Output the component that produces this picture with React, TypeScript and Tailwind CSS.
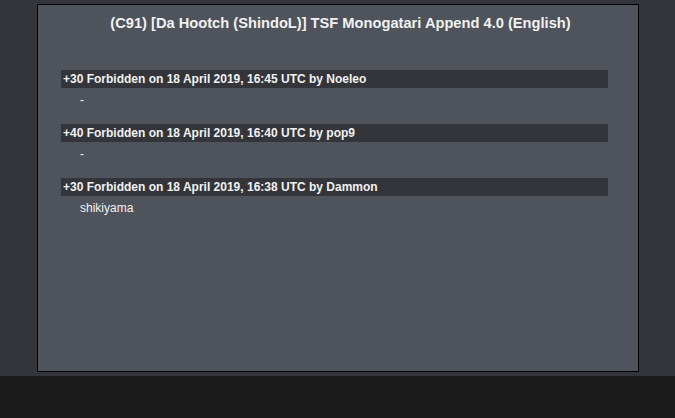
import React from 'react';

const comments = [
  { score: '+30', who: 'Noeleo', time: '16:45', body: '-' },
  { score: '+40', who: 'pop9', time: '16:40', body: '-' },
  { score: '+30', who: 'Dammon', time: '16:38', body: 'shikiyama' },
];

export default function App() {
  return (
    <div className="w-[675px] h-[418px] flex flex-col bg-[#1a1a1a] font-['Liberation_Sans',Arial,sans-serif]">
      <div className="h-[376px] bg-[#34353b] pt-[4px] pl-[37px]">
        <div className="w-[602px] h-[368px] border border-black bg-[#4f535b] text-[#f1f1f1]">
          <h1 className="text-center font-bold text-[14.67px] leading-[18px] pt-[9px] pl-[5px]">
            (C91) [Da Hootch (ShindoL)] TSF Monogatari Append 4.0 (English)
          </h1>
          <div className="mt-[38px] ml-[23px] w-[547px]">
            {comments.map((c, i) => (
              <div key={i} className="pb-[16px]">
                <div className="h-[18px] leading-[18px] bg-[#34353b] pl-[2px] text-[12px] font-bold">
                  {c.score} Forbidden on 18 April 2019, {c.time} UTC by {c.who}
                </div>
                <div className="pt-[4px] pl-[19px] text-[12px] leading-[16px] text-[#f1f1f1]">
                  {c.body}
                </div>
              </div>
            ))}
          </div>
        </div>
      </div>
    </div>
  );
}
